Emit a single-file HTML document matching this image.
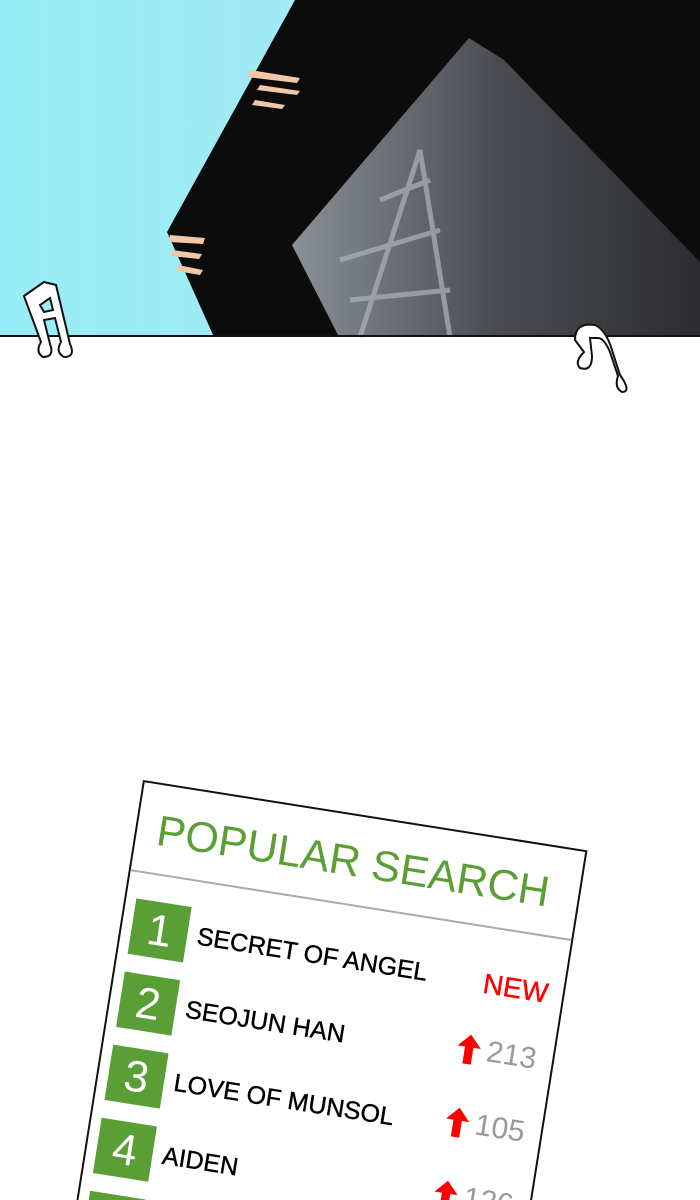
<!DOCTYPE html>
<html><head><meta charset="utf-8"><style>
html,body{margin:0;padding:0;width:700px;height:1200px;overflow:hidden;background:#fff;font-family:"Liberation Sans","DejaVu Sans",sans-serif}
.wrap{position:relative;width:700px;height:1200px;overflow:hidden}
.card{position:absolute;left:143px;top:780px;width:450px;height:520px;border:2px solid #111;background:#fff;transform-origin:0 0;transform:rotate(9deg);box-sizing:border-box}
.title{position:absolute;left:20px;top:22px;font-size:43px;color:#5a9e36;white-space:nowrap}
.div{position:absolute;left:0;right:0;top:88px;height:2px;background:#aaa}
.box{position:absolute;left:10px;width:56px;height:56px;background:#5a9e36;color:#fff;font-size:44px;text-align:center;line-height:58px}
.name{position:absolute;left:76px;font-size:25px;color:#000;white-space:nowrap;-webkit-text-stroke:0.4px #000}
.new{position:absolute;left:366px;font-size:28px;color:#f00;-webkit-text-stroke:0.4px #f00}
.num{position:absolute;left:380px;font-size:30px;color:#999}
.arr{position:absolute;left:348px;width:28px;height:34px}
</style></head><body><div class="wrap">
<svg width="700" height="338" style="position:absolute;left:0;top:0">
<defs>
<linearGradient id="sky" x1="0" y1="0" x2="1" y2="0"><stop offset="0" stop-color="#98eef6"/><stop offset="0.6" stop-color="#a6e8f4"/><stop offset="1" stop-color="#b6dcee"/></linearGradient>
<linearGradient id="gr" x1="0" y1="0" x2="1" y2="0"><stop offset="0" stop-color="#8a8f98"/><stop offset="0.5" stop-color="#4a4c52"/><stop offset="1" stop-color="#2c2d31"/></linearGradient>
</defs>
<rect width="700" height="337" fill="url(#sky)"/>
<polygon points="295,0 700,0 700,337 214,337 167,232" fill="#0c0c0c"/>
<polygon points="469,38 504,60 700,262 700,337 339,337 292,245" fill="url(#gr)"/>
<g stroke="#aeb3ba" stroke-width="5" fill="none" opacity="0.7"><path d="M360,337 L420,150 L450,337 M340,260 L440,230 M350,300 L450,290 M380,200 L430,180"/></g>
<g fill="#f0c8a8"><path d="M250,70 l50,8 l-3,5 l-50,-6z M260,85 l40,6 -3,4 -40,-5z M255,100 l30,5 -3,4 -30,-4z M170,235 l35,3 -2,6 -34,-2z M172,250 l30,4 -3,5 -28,-3z M178,265 l25,5 -3,5 -23,-4z"/></g>
<line x1="0" y1="336" x2="700" y2="336" stroke="#111" stroke-width="2"/>
</svg>
<svg width="700" height="420" style="position:absolute;left:0;top:0">
<g fill="#fff" stroke="#111" stroke-width="2">
<path d="M24,296 L44,282 L56,285 L70,344 Q76,357 64,357 Q55,352 61,342 L55,318 L44,320 L50,344 Q55,357 43,357 Q35,352 41,342 Z M40,305 L44,312 L53,310 L50,298 Z"/>
<path d="M575,340 Q575,322 595,325 Q606,330 612,350 L620,375 Q632,392 622,392 Q614,388 618,376 L610,352 Q604,338 598,338 L590,338 L592,356 Q592,372 580,368 Q574,362 584,352 Z"/>
</g></svg>
<div class="card">
<div class="title">POPULAR SEARCH</div>
<div class="div"></div>
<div class="box" style="top:116px">1</div><div class="name" style="top:130px">SECRET OF ANGEL</div><div class="new" style="top:130px">NEW</div>
<div class="box" style="top:190px">2</div><div class="name" style="top:204px">SEOJUN HAN</div>
<svg class="arr" style="top:196px" viewBox="0 0 26 32"><path d="M13,2 L24,14 L17,14 L17,30 L9,30 L9,14 L2,14Z" fill="#f00"/></svg><div class="num" style="top:196px">213</div>
<div class="box" style="top:264px">3</div><div class="name" style="top:278px">LOVE OF MUNSOL</div>
<svg class="arr" style="top:270px" viewBox="0 0 26 32"><path d="M13,2 L24,14 L17,14 L17,30 L9,30 L9,14 L2,14Z" fill="#f00"/></svg><div class="num" style="top:270px">105</div>
<div class="box" style="top:338px">4</div><div class="name" style="top:352px">AIDEN</div>
<svg class="arr" style="top:344px" viewBox="0 0 26 32"><path d="M13,2 L24,14 L17,14 L17,30 L9,30 L9,14 L2,14Z" fill="#f00"/></svg><div class="num" style="top:344px">126</div>
<div class="box" style="top:412px">5</div>
</div>
</div></body></html>
